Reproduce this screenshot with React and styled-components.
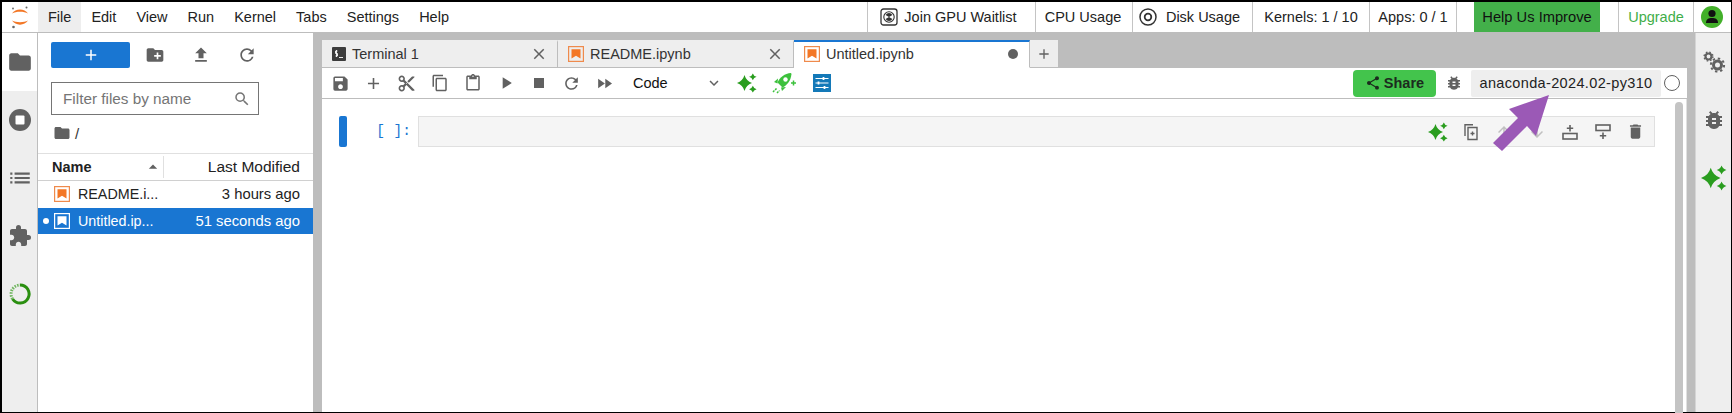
import React from "react";
import styled, { createGlobalStyle } from "styled-components";
import {
  MdFolder,
  MdCreateNewFolder,
  MdFileUpload,
  MdRefresh,
  MdList,
  MdExtension,
  MdSave,
  MdAdd,
  MdContentCut,
  MdContentCopy,
  MdContentPaste,
  MdPlayArrow,
  MdStop,
  MdFastForward,
  MdExpandMore,
  MdShare,
  MdBugReport,
  MdDelete,
  MdSearch,
  MdClose,
  MdArrowUpward,
  MdArrowDownward,
  MdArrowDropUp,
} from "react-icons/md";

const GlobalStyle = createGlobalStyle`
  html, body {
    margin: 0;
    padding: 0;
    background: #000;
    overflow: hidden;
  }
  body {
    font-family: "Liberation Sans", Arial, sans-serif;
    color: #222;
  }
`;

const GREY = "#616161";
const GREEN = "#2a9d1f";

const Sparkles = ({ size = 20 }) => (
  <svg width={size} height={size} viewBox="0 0 24 24" fill={GREEN}>
    <path d="M9 2.5 Q11 9.5 18 12 Q11 14.5 9 21.5 Q7 14.5 0 12 Q7 9.5 9 2.5 Z" />
    <path d="M19 0.5 Q20 3.6 23.5 4.6 Q20 5.6 19 8.7 Q18 5.6 14.5 4.6 Q18 3.6 19 0.5 Z" />
    <path d="M19 15.3 Q20 18.4 23.5 19.4 Q20 20.4 19 23.5 Q18 20.4 14.5 19.4 Q18 18.4 19 15.3 Z" />
  </svg>
);

const Logo = () => (
  <svg width="20" height="26" viewBox="0 0 20 26">
    <path d="M2 9.5 C5.5 4 14.5 4 18 9.5 C14 7.2 6 7.2 2 9.5 Z" fill="#f37726" />
    <path d="M2 16.5 C5.5 22 14.5 22 18 16.5 C14 18.8 6 18.8 2 16.5 Z" fill="#f37726" />
    <circle cx="16.5" cy="3.5" r="1" fill="#666" />
    <circle cx="3" cy="4.5" r="0.9" fill="#666" />
    <circle cx="3.5" cy="23" r="1.3" fill="#666" />
  </svg>
);

const NotebookIcon = ({ light }) => (
  <svg width="16" height="16" viewBox="0 0 16 16">
    <rect x="0.6" y="0.6" width="14.8" height="14.8" fill="none" stroke={light ? "#fff" : "#ef8a4c"} strokeWidth="1.2" />
    <path d="M3.5 3.2 H12.5 V12.5 L8 9.8 L3.5 12.5 Z" fill={light ? "#fff" : "#f37726"} />
  </svg>
);

const TerminalIcon = () => (
  <svg width="14" height="14" viewBox="0 0 14 14">
    <rect width="14" height="14" rx="1" fill="#3c3c3c" />
    <path d="M5.5 4 H3.5 V6.5 H5.5 V9 H3.5 M4.5 3 V10 M7 10.5 H11" stroke="#fff" strokeWidth="0.9" fill="none" />
  </svg>
);

const StopCircle = () => (
  <svg width="22" height="22" viewBox="0 0 22 22">
    <circle cx="11" cy="11" r="11" fill={GREY} />
    <rect x="6.5" y="6.5" width="9" height="9" rx="1" fill="#fff" />
  </svg>
);

const RingIcon = () => (
  <svg width="22" height="22" viewBox="0 0 22 22" fill="none">
    <path d="M11 2 A9 9 0 1 1 3.6 16" stroke="#2a8f10" strokeWidth="3" />
    <path d="M3.6 16 A9 9 0 0 1 11 2" stroke="#6fb55e" strokeWidth="3" strokeDasharray="1.5 1.2" />
  </svg>
);

const GearsIcon = () => (
  <svg width="24" height="24" viewBox="0 0 24 24" fill="none" stroke={GREY}>
    <circle cx="6.5" cy="6.5" r="3" strokeWidth="2.2" />
    <circle cx="6.5" cy="6.5" r="4.4" strokeWidth="1.4" strokeDasharray="1.6 1.9" />
    <circle cx="15.5" cy="15" r="4" strokeWidth="3" />
    <circle cx="15.5" cy="15" r="6.6" strokeWidth="2" strokeDasharray="2.4 2.8" />
  </svg>
);

const GpuIcon = () => (
  <svg width="18" height="18" viewBox="0 0 18 18" fill="none" stroke="#333">
    <rect x="1" y="1" width="16" height="16" rx="2.5" strokeWidth="1.3" />
    <circle cx="9" cy="9" r="5.2" strokeWidth="1.1" />
    <path d="M9 9 L5.6 7 A4 4 0 0 1 12.4 7 Z M9 9 L9 13 A4 4 0 0 1 5.6 11 Z M9 9 L12.4 11 A4 4 0 0 1 9 13 Z" fill="#333" stroke="none" />
  </svg>
);

const DiskIcon = () => (
  <svg width="18" height="18" viewBox="0 0 18 18" fill="none" stroke="#333">
    <circle cx="9" cy="9" r="8" strokeWidth="1.5" />
    <circle cx="9" cy="9" r="3.3" strokeWidth="1.8" />
  </svg>
);

const Avatar = () => (
  <svg width="22" height="22" viewBox="0 0 22 22">
    <circle cx="11" cy="11" r="11" fill="#43b02a" />
    <circle cx="11" cy="7.5" r="3.6" fill="#111" />
    <path d="M5 17 C5 13 7.5 12 11 12 C14.5 12 17 13 17 17 Z" fill="#111" />
  </svg>
);

const RocketIcon = () => (
  <svg width="26" height="22" viewBox="0 0 26 22" fill="#3cc13c">
    <path d="M20 1 C13.5 1.5 9 5 6.5 10.5 L11.5 15.5 C16.5 13 19.8 8.5 20.5 2 Z" />
    <circle cx="14.5" cy="7.5" r="2.2" fill="#fff" />
    <path d="M7 6.5 L3 10 L6.5 11.5 Z M15 15 L11 19 L10 15.5 Z" />
    <path d="M22.5 8.5 V13.5 M20 11 H25" stroke="#3cc13c" strokeWidth="1.5" />
    <path d="M2 20 L6 16 M6 21 L8.5 18.5" stroke="#3cc13c" strokeWidth="1.5" strokeDasharray="2 1" />
  </svg>
);

const SlidersIcon = () => (
  <svg width="18" height="18" viewBox="0 0 18 18">
    <rect width="18" height="18" fill="#1479b8" />
    <path d="M2.5 4.5 H15.5 M2.5 9 H15.5 M2.5 13.5 H15.5" stroke="#fff" strokeWidth="1.2" />
    <path d="M10.5 3 V6 M5.5 7.5 V10.5 M11.5 12 V15" stroke="#fff" strokeWidth="1.8" />
  </svg>
);

const DuplicateIcon = () => (
  <svg width="18" height="18" viewBox="0 0 18 18" fill="none" stroke={GREY} strokeWidth="1.4">
    <path d="M3 13 V1.8 H11" />
    <path d="M6 4.5 H15 V16.5 H6 Z" />
    <path d="M10.5 8.5 V12.5 M8.5 10.5 H12.5" />
  </svg>
);

const InsertAbove = () => (
  <svg width="18" height="18" viewBox="0 0 18 18" fill="none" stroke={GREY}>
    <rect x="2" y="10.5" width="14" height="5.5" strokeWidth="1.6" />
    <path d="M9 2 V8.5 M5.8 5.2 H12.2" strokeWidth="1.6" />
  </svg>
);

const InsertBelow = () => (
  <svg width="18" height="18" viewBox="0 0 18 18" fill="none" stroke={GREY}>
    <rect x="2" y="2" width="14" height="5.5" strokeWidth="1.6" />
    <path d="M9 9.5 V16 M5.8 12.8 H12.2" strokeWidth="1.6" />
  </svg>
);

const Frame = styled.div`
  width: 1732px;
  height: 413px;
  box-sizing: border-box;
  padding: 2px 1px 1px 2px;
  background: #000;
  position: relative;
`;

const Screen = styled.div`
  height: 100%;
  display: flex;
  flex-direction: column;
  background: #bdbdbd;
`;

const TopBar = styled.div`
  height: 30px;
  flex: none;
  display: flex;
  background: #fff;
  border-bottom: 1px solid #bdbdbd;
  font-size: 14.5px;
`;

const LogoCell = styled.div`
  width: 36px;
  display: flex;
  align-items: center;
  justify-content: center;
`;

const Menu = styled.div`
  display: flex;
  flex: 1;
`;

const MenuItem = styled.div`
  display: flex;
  align-items: center;
  padding: 0 10px;
  background: ${(p) => (p.$active ? "#eeeeee" : "transparent")};
`;

const Status = styled.div`
  display: flex;
`;

const StatusItem = styled.div`
  width: ${(p) => p.$w}px;
  box-sizing: border-box;
  display: flex;
  align-items: center;
  justify-content: center;
  gap: ${(p) => p.$gap || 6}px;
  padding-right: ${(p) => p.$pr || 0}px;
  border-left: 1px solid #c4c4c4;
  font-size: 14.5px;
  color: ${(p) => p.$color || "#222"};
`;

const HelpButton = styled.div`
  width: 126px;
  margin-left: 17px;
  margin-right: 18px;
  display: flex;
  align-items: center;
  justify-content: center;
  background: #43b04a;
  font-size: 14.7px;
  color: #111;
`;

const Body = styled.div`
  flex: 1;
  min-height: 0;
  display: flex;
`;

const Rail = styled.div`
  width: 35px;
  flex: none;
  background: #eeeeee;
  border-right: 1px solid #bdbdbd;
  display: flex;
  flex-direction: column;
`;

const RightRail = styled(Rail)`
  width: 35px;
  margin-left: 8px;
  border-right: none;
  border-left: 1px solid #d5d5d5;
`;

const RailItem = styled.div`
  height: 58px;
  flex: none;
  display: flex;
  align-items: center;
  justify-content: center;
  color: ${GREY};
  background: ${(p) => (p.$active ? "#fff" : "transparent")};
`;

const FilePanel = styled.div`
  width: 275px;
  flex: none;
  background: #fff;
  display: flex;
  flex-direction: column;
  margin-right: 9px;
`;

const PanelTools = styled.div`
  display: flex;
  align-items: center;
  padding: 9px 0 0 13px;
  height: 26px;
`;

const NewButton = styled.div`
  width: 79px;
  height: 26px;
  border-radius: 2px;
  background: #1976d2;
  color: #fff;
  display: flex;
  align-items: center;
  justify-content: center;
  margin-right: 2px;
`;

const ToolIcon = styled.div`
  width: ${(p) => p.$w || 46}px;
  flex: none;
  display: flex;
  align-items: center;
  justify-content: center;
  color: ${GREY};
`;

const FilterBox = styled.div`
  margin: 14px 0 0 13px;
  width: 208px;
  height: 33px;
  box-sizing: border-box;
  border: 1px solid #757575;
  display: flex;
  align-items: center;
  justify-content: space-between;
  padding: 0 7px 0 11px;
  font-size: 15.3px;
  color: #757575;
`;

const Crumb = styled.div`
  display: flex;
  align-items: center;
  gap: 4px;
  height: 36px;
  padding: 0 0 2px 15px;
  font-size: 15px;
  color: #333;
`;

const HeaderRow = styled.div`
  height: 26px;
  display: flex;
  align-items: center;
  border-top: 1px solid #e0e0e0;
  border-bottom: 1px solid #d0d0d0;
  font-size: 14.5px;
`;

const NameHead = styled.div`
  width: 126px;
  height: 22px;
  box-sizing: border-box;
  padding-left: 14px;
  display: flex;
  align-items: center;
  justify-content: space-between;
  border-right: 1px solid #e0e0e0;
  font-weight: 700;
`;

const DateHead = styled.div`
  flex: 1;
  text-align: right;
  padding-right: 13px;
  font-size: 15.5px;
`;

const FileRow = styled.div`
  height: 26.5px;
  display: flex;
  align-items: center;
  font-size: 14.8px;
  position: relative;
  background: ${(p) => (p.$selected ? "#1976d2" : "transparent")};
  color: ${(p) => (p.$selected ? "#fff" : "#222")};
  padding: 0 13px 0 16px;
  gap: 8px;
`;

const RunningDot = styled.span`
  position: absolute;
  left: 5px;
  width: 6px;
  height: 6px;
  border-radius: 50%;
  background: #fff;
`;

const FileName = styled.span`
  flex: 1;
  font-size: 14.3px;
`;

const Main = styled.div`
  flex: 1;
  min-width: 0;
  display: flex;
  flex-direction: column;
  padding-top: 7px;
`;

const TabBar = styled.div`
  height: 28px;
  flex: none;
  display: flex;
`;

const Tab = styled.div`
  width: 236px;
  box-sizing: border-box;
  display: flex;
  align-items: center;
  gap: 6px;
  padding: 0 9px 1px 10px;
  font-size: 14.5px;
  color: #333;
  background: ${(p) => (p.$active ? "#fff" : "#eeeeee")};
  border-right: 1px solid #bdbdbd;
  border-top: 2px solid ${(p) => (p.$active ? "#1976d2" : "#eeeeee")};
  border-bottom: 1px solid ${(p) => (p.$active ? "#fff" : "#bdbdbd")};
`;

const TabTitle = styled.span`
  flex: 1;
`;

const AddTab = styled.div`
  width: 28px;
  display: flex;
  align-items: center;
  justify-content: center;
  background: #eeeeee;
  color: #616161;
  border-bottom: 1px solid #bdbdbd;
  box-sizing: border-box;
`;

const Dirty = styled.span`
  width: 10px;
  height: 10px;
  border-radius: 50%;
  background: #616161;
  margin-right: 2px;
`;

const NotebookToolbar = styled.div`
  height: 30px;
  flex: none;
  display: flex;
  align-items: center;
  background: #fff;
  border-bottom: 1px solid #bdbdbd;
  padding-left: 2px;
`;

const CellType = styled.div`
  width: 102px;
  flex: none;
  display: flex;
  align-items: center;
  justify-content: space-between;
  font-size: 14.5px;
  color: #111;
  padding-left: 12px;
  box-sizing: border-box;
  margin-right: 7px;
`;

const Spacer = styled.div`
  flex: 1;
`;

const ShareButton = styled.div`
  width: 83px;
  height: 27px;
  border-radius: 4px;
  background: #43c44c;
  display: flex;
  align-items: center;
  justify-content: center;
  gap: 3px;
  font-size: 14.5px;
  font-weight: 700;
  color: #1c2b1e;
`;

const KernelName = styled.div`
  width: 190px;
  height: 27px;
  border-radius: 2px;
  background: #eeeeee;
  display: flex;
  align-items: center;
  justify-content: center;
  font-size: 14.5px;
  letter-spacing: 0.35px;
  color: #222;
`;

const KernelCircle = styled.div`
  width: 16px;
  height: 16px;
  box-sizing: border-box;
  border: 1.4px solid #616161;
  border-radius: 50%;
  margin: 0 7px 0 3px;
`;

const Canvas = styled.div`
  flex: 1;
  background: #fff;
  display: flex;
  padding: 17px 0 0 17px;
  border-right: 1px solid #e0e0e0;
  position: relative;
`;

const CellBar = styled.div`
  width: 8px;
  height: 31px;
  border-radius: 2px;
  background: #1976d2;
  flex: none;
`;

const Prompt = styled.div`
  width: 71px;
  flex: none;
  padding-right: 7px;
  box-sizing: border-box;
  text-align: right;
  line-height: 31px;
  font-family: "Liberation Mono", "DejaVu Sans Mono", monospace;
  font-size: 14.5px;
  color: #1976d2;
`;

const CellInput = styled.div`
  width: 1237px;
  height: 31px;
  box-sizing: border-box;
  flex: none;
  background: #f5f5f5;
  border: 1px solid #e0e0e0;
  display: flex;
  align-items: center;
  justify-content: flex-end;
  padding-right: 2px;
`;

const CellTool = styled.div`
  width: 33px;
  display: flex;
  align-items: center;
  justify-content: center;
  color: ${GREY};
  opacity: ${(p) => (p.$faded ? 0.35 : 1)};
`;

const ScrollThumb = styled.div`
  width: 8px;
  height: 100%;
  border-radius: 4px 4px 0 0;
  background: #c4c4c4;
  position: absolute;
  right: 3px;
  top: 3px;
`;

const Callout = styled.svg`
  position: absolute;
  left: 1490px;
  top: 90px;
`;

const topMenus = ["Edit", "View", "Run", "Kernel", "Tabs", "Settings", "Help"];

export default function App() {
  return (
    <>
      <GlobalStyle />
      <Frame>
        <Screen>
          <TopBar>
            <LogoCell>
              <Logo />
            </LogoCell>
            <Menu>
              <MenuItem $active>File</MenuItem>
              {topMenus.map((m) => (
                <MenuItem key={m}>{m}</MenuItem>
              ))}
            </Menu>
            <Status>
              <StatusItem $w={168} $pr={6}>
                <GpuIcon />
                Join GPU Waitlist
              </StatusItem>
              <StatusItem $w={97} $pr={2}>
                CPU Usage
              </StatusItem>
              <StatusItem $w={120} $gap={9} $pr={6}>
                <DiskIcon />
                Disk Usage
              </StatusItem>
              <StatusItem $w={117}>Kernels: 1 / 10</StatusItem>
              <StatusItem $w={87}>Apps: 0 / 1</StatusItem>
              <StatusItem $w={0} />
              <HelpButton>Help Us Improve</HelpButton>
              <StatusItem $w={75} $color="#3fae49">
                Upgrade
              </StatusItem>
              <StatusItem $w={38} $pr={1}>
                <Avatar />
              </StatusItem>
            </Status>
          </TopBar>
          <Body>
            <Rail>
              <RailItem $active>
                <MdFolder size={26} />
              </RailItem>
              <RailItem>
                <StopCircle />
              </RailItem>
              <RailItem>
                <MdList size={26} />
              </RailItem>
              <RailItem>
                <MdExtension size={24} />
              </RailItem>
              <RailItem>
                <RingIcon />
              </RailItem>
            </Rail>
            <FilePanel>
              <PanelTools>
                <NewButton>
                  <MdAdd size={18} />
                </NewButton>
                <ToolIcon>
                  <MdCreateNewFolder size={20} />
                </ToolIcon>
                <ToolIcon>
                  <MdFileUpload size={20} />
                </ToolIcon>
                <ToolIcon>
                  <MdRefresh size={20} />
                </ToolIcon>
              </PanelTools>
              <FilterBox>
                Filter files by name
                <MdSearch size={18} />
              </FilterBox>
              <Crumb>
                <MdFolder size={18} color={GREY} />/
              </Crumb>
              <HeaderRow>
                <NameHead>
                  Name
                  <MdArrowDropUp size={20} color={GREY} />
                </NameHead>
                <DateHead>Last Modified</DateHead>
              </HeaderRow>
              <FileRow>
                <NotebookIcon />
                <FileName>README.i...</FileName>3 hours ago
              </FileRow>
              <FileRow $selected>
                <RunningDot />
                <NotebookIcon light />
                <FileName>Untitled.ip...</FileName>51 seconds ago
              </FileRow>
            </FilePanel>
            <Main>
              <TabBar>
                <Tab>
                  <TerminalIcon />
                  <TabTitle>Terminal 1</TabTitle>
                  <MdClose size={18} color={GREY} />
                </Tab>
                <Tab>
                  <NotebookIcon />
                  <TabTitle>README.ipynb</TabTitle>
                  <MdClose size={18} color={GREY} />
                </Tab>
                <Tab $active>
                  <NotebookIcon />
                  <TabTitle>Untitled.ipynb</TabTitle>
                  <Dirty />
                </Tab>
                <AddTab>
                  <MdAdd size={16} />
                </AddTab>
              </TabBar>
              <NotebookToolbar>
                <ToolIcon $w={33}>
                  <MdSave size={19} />
                </ToolIcon>
                <ToolIcon $w={33}>
                  <MdAdd size={19} />
                </ToolIcon>
                <ToolIcon $w={33}>
                  <MdContentCut size={19} />
                </ToolIcon>
                <ToolIcon $w={33}>
                  <MdContentCopy size={18} />
                </ToolIcon>
                <ToolIcon $w={33}>
                  <MdContentPaste size={18} />
                </ToolIcon>
                <ToolIcon $w={33}>
                  <MdPlayArrow size={20} />
                </ToolIcon>
                <ToolIcon $w={33}>
                  <MdStop size={20} />
                </ToolIcon>
                <ToolIcon $w={33}>
                  <MdRefresh size={19} />
                </ToolIcon>
                <ToolIcon $w={33}>
                  <MdFastForward size={19} />
                </ToolIcon>
                <CellType>
                  Code
                  <MdExpandMore size={18} color={GREY} />
                </CellType>
                <ToolIcon $w={33}>
                  <Sparkles />
                </ToolIcon>
                <ToolIcon $w={41}>
                  <RocketIcon />
                </ToolIcon>
                <ToolIcon $w={35}>
                  <SlidersIcon />
                </ToolIcon>
                <Spacer />
                <ShareButton>
                  <MdShare size={16} />
                  Share
                </ShareButton>
                <ToolIcon $w={35}>
                  <MdBugReport size={18} />
                </ToolIcon>
                <KernelName>anaconda-2024.02-py310</KernelName>
                <KernelCircle />
              </NotebookToolbar>
              <Canvas>
                <CellBar />
                <Prompt>[ ]:</Prompt>
                <CellInput>
                  <CellTool>
                    <Sparkles />
                  </CellTool>
                  <CellTool>
                    <DuplicateIcon />
                  </CellTool>
                  <CellTool $faded>
                    <MdArrowUpward size={18} />
                  </CellTool>
                  <CellTool $faded>
                    <MdArrowDownward size={18} />
                  </CellTool>
                  <CellTool>
                    <InsertAbove />
                  </CellTool>
                  <CellTool>
                    <InsertBelow />
                  </CellTool>
                  <CellTool>
                    <MdDelete size={19} />
                  </CellTool>
                </CellInput>
                <ScrollThumb />
              </Canvas>
            </Main>
            <RightRail>
              <RailItem>
                <GearsIcon />
              </RailItem>
              <RailItem>
                <MdBugReport size={24} />
              </RailItem>
              <RailItem>
                <Sparkles size={26} />
              </RailItem>
            </RightRail>
          </Body>
        </Screen>
        <Callout width="70" height="66" viewBox="0 0 70 66">
          <path d="M59 5 L19 19 L28 28 L3 53 L12 61 L37 36 L46 46 Z" fill="#9b59b6" />
        </Callout>
      </Frame>
    </>
  );
}
